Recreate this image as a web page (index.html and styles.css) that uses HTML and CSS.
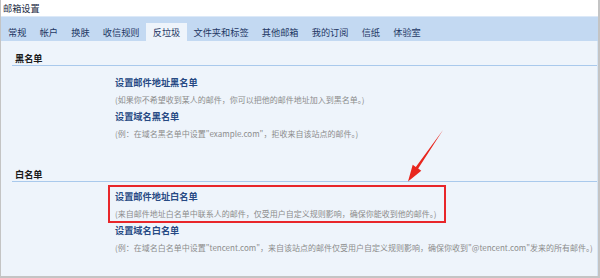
FILE: index.html
```html
<!DOCTYPE html>
<html lang="zh-CN">
<head>
  <meta charset="UTF-8" />
  <title>邮箱设置</title>
  <link rel="stylesheet" href="styles.css">
</head>
<body>
  <div class="window">
    <div class="titlebar">邮箱设置</div>

    <div class="tabs">
      <span class="tab">常规</span>
      <span class="tab">帐户</span>
      <span class="tab">换肤</span>
      <span class="tab">收信规则</span>
      <span class="tab active">反垃圾</span>
      <span class="tab">文件夹和标签</span>
      <span class="tab">其他邮箱</span>
      <span class="tab">我的订阅</span>
      <span class="tab">信纸</span>
      <span class="tab">体验室</span>
    </div>

    <div class="content">
      <div class="section first">
        <div class="section-head">黑名单</div>
        <div class="items">
          <div class="item">
            <div class="item-title">设置邮件地址黑名单</div>
            <div class="item-desc">(如果你不希望收到某人的邮件，你可以把他的邮件地址加入到黑名单。)</div>
          </div>
          <div class="item">
            <div class="item-title">设置域名黑名单</div>
            <div class="item-desc">(例：在域名黑名单中设置"example.com"，拒收来自该站点的邮件。)</div>
          </div>
        </div>
      </div>

      <div class="section second">
        <div class="section-head">白名单</div>
        <div class="items">
          <div class="item highlight">
            <div class="item-title">设置邮件地址白名单</div>
            <div class="item-desc">(来自邮件地址白名单中联系人的邮件，仅受用户自定义规则影响，确保你能收到他的邮件。)</div>
          </div>
          <div class="item">
            <div class="item-title">设置域名白名单</div>
            <div class="item-desc">(例：在域名白名单中设置"tencent.com"，来自该站点的邮件仅受用户自定义规则影响，确保你收到"@tencent.com"发来的所有邮件。)</div>
          </div>
        </div>
      </div>
    </div>

    <!-- red arrow pointing at the whitelist item -->
    <svg class="arrow" width="600" height="278" viewBox="0 0 600 278">
      <polygon points="443,130 418.2,168.6 421.3,170.8 408,181.5 412.7,164.8 415.8,167" fill="#e8261e" />
    </svg>
  </div>
</body>
</html>
```

FILE: styles.css
```css
body {
  margin: 0;
  font-family: "Noto Sans CJK SC", "Noto Sans", sans-serif;
}
.window {
  position: relative;
  width: 600px;
  height: 278px;
  box-sizing: border-box;
  display: flex;
  flex-direction: column;
  border-left: 1px solid #c4c4c4;
  border-right: 2px solid #c4c4c4;
  border-bottom: 2px solid #c4c4c4;
  background: #fff;
}
.titlebar {
  height: 16px;
  line-height: 16px;
  padding-left: 2px;
  font-size: 9.2px;
  color: #1b2a44;
  border-bottom: 1px solid #dce9f8;
}
.tabs {
  height: 24px;
  display: flex;
  align-items: flex-end;
  padding-left: 0.5px;
  background-color: #c3d9f2;
}
.tab {
  height: 18px;
  line-height: 18px;
  padding: 0 6.6px;
  font-size: 9.2px;
  color: #1e3764;
  white-space: nowrap;
}
.tab.active {
  background-color: #eef4fb;
}
.content {
  flex: 1;
  background-color: #eef4fb;
  border-right: 1px solid #d6e5f5;
}
.section {
  margin-left: 11px;
}
.section.first {
  padding-top: 10px;
}
.section.second {
  padding-top: 24px;
}
.section-head {
  padding-left: 3px;
  line-height: 14px;
  font-size: 9.2px;
  font-weight: bold;
  color: #1a1a1a;
  border-bottom: 1px solid #a9c9ec;
}
.items {
  padding-left: 103px;
}
.first .items {
  padding-top: 9px;
}
.second .items {
  padding-top: 3px;
}
.item {
  margin-bottom: 2px;
}
.item-title {
  line-height: 15px;
  font-size: 9.2px;
  font-weight: bold;
  color: #274a84;
}
.item-desc {
  margin-top: 2px;
  line-height: 15px;
  font-size: 8px;
  color: #8c8c8c;
  white-space: nowrap;
}
.item.highlight {
  width: 338px;
  box-sizing: border-box;
  margin-left: -7px;
  margin-bottom: 0;
  padding: 2px 0 0 5px;
  border: 2px solid #e8262a;
}
.arrow {
  position: absolute;
  left: -1px;
  top: 0;
  pointer-events: none;
}
```
